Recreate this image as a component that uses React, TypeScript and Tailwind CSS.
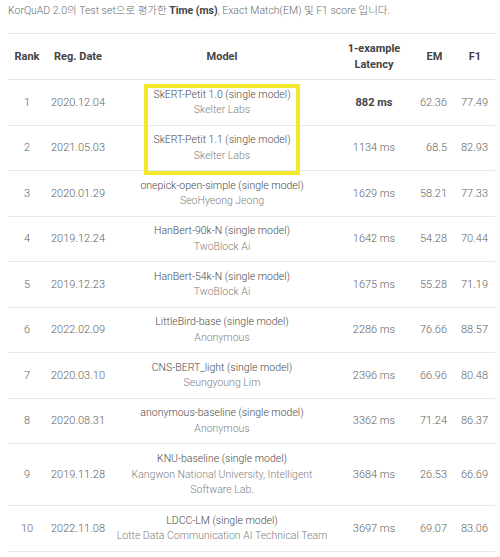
import React from "react";

type Row = {
  rank: string;
  date: string;
  model: string;
  author: string[];
  latency: string;
  em: string;
  f1: string;
  bold?: boolean;
};

const rows: Row[] = [
  { rank: "1", date: "2020.12.04", model: "SkERT-Petit 1.0 (single model)", author: ["Skelter Labs"], latency: "882 ms", em: "62.36", f1: "77.49", bold: true },
  { rank: "2", date: "2021.05.03", model: "SkERT-Petit 1.1 (single model)", author: ["Skelter Labs"], latency: "1134 ms", em: "68.5", f1: "82.93" },
  { rank: "3", date: "2020.01.29", model: "onepick-open-simple (single model)", author: ["SeoHyeong Jeong"], latency: "1629 ms", em: "58.21", f1: "77.33" },
  { rank: "4", date: "2019.12.24", model: "HanBert-90k-N (single model)", author: ["TwoBlock Ai"], latency: "1642 ms", em: "54.28", f1: "70.44" },
  { rank: "5", date: "2019.12.23", model: "HanBert-54k-N (single model)", author: ["TwoBlock Ai"], latency: "1675 ms", em: "55.28", f1: "71.19" },
  { rank: "6", date: "2022.02.09", model: "LittleBird-base (single model)", author: ["Anonymous"], latency: "2286 ms", em: "76.66", f1: "88.57" },
  { rank: "7", date: "2020.03.10", model: "CNS-BERT_light (single model)", author: ["Seungyoung Lim"], latency: "2396 ms", em: "66.96", f1: "80.48" },
  { rank: "8", date: "2020.08.31", model: "anonymous-baseline (single model)", author: ["Anonymous"], latency: "3362 ms", em: "71.24", f1: "86.37" },
  { rank: "9", date: "2019.11.28", model: "KNU-baseline (single model)", author: ["Kangwon National University, Intelligent", "Software Lab."], latency: "3684 ms", em: "26.53", f1: "66.69" },
  { rank: "10", date: "2022.11.08", model: "LDCC-LM (single model)", author: ["Lotte Data Communication AI Technical Team"], latency: "3697 ms", em: "69.07", f1: "83.06" },
];

export default function App() {
  return (
    <div
      className="w-[500px] h-[557px] bg-white overflow-hidden text-[11px] font-light text-[#5f5f5f]"
      style={{ fontFamily: "Roboto, 'Noto Sans CJK KR', sans-serif" }}
    >
      <div className="pl-[8px] pt-[3px] h-[33px] leading-[15px] text-[10.5px] text-[#6b6b6b]">
        KorQuAD 2.0의 Test set으로 평가한 <span className="font-bold text-[#444]">Time (ms)</span>, Exact Match(EM) 및 F1 score 입니다.
      </div>
      <div className="relative ml-[8px] w-[487px] border-t border-[#e6e6e6]">
        <div className="flex items-center h-[46px] border-b border-[#e3e3e3] font-bold text-[#444] leading-[15.5px]">
          <div className="w-[38px] text-center">Rank</div>
          <div className="w-[64px] text-center">Reg. Date</div>
          <div className="w-[224px] text-center">Model</div>
          <div className="w-[80px] text-center">1-example<br />Latency</div>
          <div className="w-[41px] text-center">EM</div>
          <div className="w-[40px] text-center">F1</div>
        </div>
        {rows.map((r) => (
          <div
            key={r.rank}
            className={`flex items-center border-b border-[#e8e8e8] leading-[15.5px] ${r.author.length > 1 ? "h-[62px]" : "h-[45.5px]"}`}
          >
            <div className="w-[38px] text-center">{r.rank}</div>
            <div className="w-[64px] text-center">{r.date}</div>
            <div className="w-[224px] text-center text-[10.5px]">
              <div className="text-[#4a4a4a]">{r.model}</div>
              {r.author.map((a) => (
                <div key={a} className="text-[#808080]">{a}</div>
              ))}
            </div>
            <div className={`w-[80px] text-center ${r.bold ? "font-bold text-[#444]" : ""}`}>{r.latency}</div>
            <div className="w-[41px] text-right pr-[8px]">{r.em}</div>
            <div className="w-[40px] text-right pr-[7px]">{r.f1}</div>
          </div>
        ))}
        <div className="absolute left-[136px] top-[50px] w-[156px] h-[91px] border-[4px] border-[#f3e82a]" />
      </div>
    </div>
  );
}
